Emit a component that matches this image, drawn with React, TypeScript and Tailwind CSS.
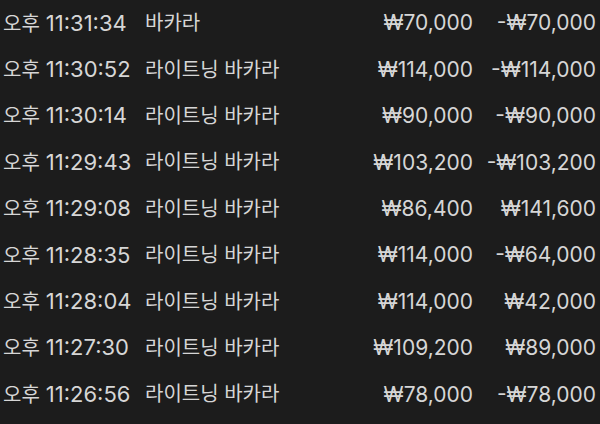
import React from "react";

const rows = [
  ["11:31:34", "바카라", "₩70,000", "-₩70,000"],
  ["11:30:52", "라이트닝 바카라", "₩114,000", "-₩114,000"],
  ["11:30:14", "라이트닝 바카라", "₩90,000", "-₩90,000"],
  ["11:29:43", "라이트닝 바카라", "₩103,200", "-₩103,200"],
  ["11:29:08", "라이트닝 바카라", "₩86,400", "₩141,600"],
  ["11:28:35", "라이트닝 바카라", "₩114,000", "-₩64,000"],
  ["11:28:04", "라이트닝 바카라", "₩114,000", "₩42,000"],
  ["11:27:30", "라이트닝 바카라", "₩109,200", "₩89,000"],
  ["11:26:56", "라이트닝 바카라", "₩78,000", "-₩78,000"],
];

export default function App() {
  return (
    <div
      className="w-[600px] h-[424px] bg-[#1c1c1c] text-[#d6d6d6] overflow-hidden"
      style={{ fontFamily: 'Inter, "Noto Sans CJK KR", sans-serif' }}
    >
      <div className="flex flex-col">
        {rows.map((r, i) => (
          <div key={i} className="flex items-center h-[46.4px] pl-[3px] whitespace-nowrap text-[21px]">
            <div className="w-[142px] shrink-0 flex items-baseline">
              <span className="text-[20px]">오후</span>
              <span className="ml-[6px] text-[22px]">{r[0]}</span>
            </div>
            <div className="w-[200px] shrink-0 text-[20px]">{r[1]}</div>
            <div className="w-[128px] shrink-0 text-right">{r[2]}</div>
            <div className="w-[123px] shrink-0 text-right">{r[3]}</div>
          </div>
        ))}
      </div>
    </div>
  );
}
